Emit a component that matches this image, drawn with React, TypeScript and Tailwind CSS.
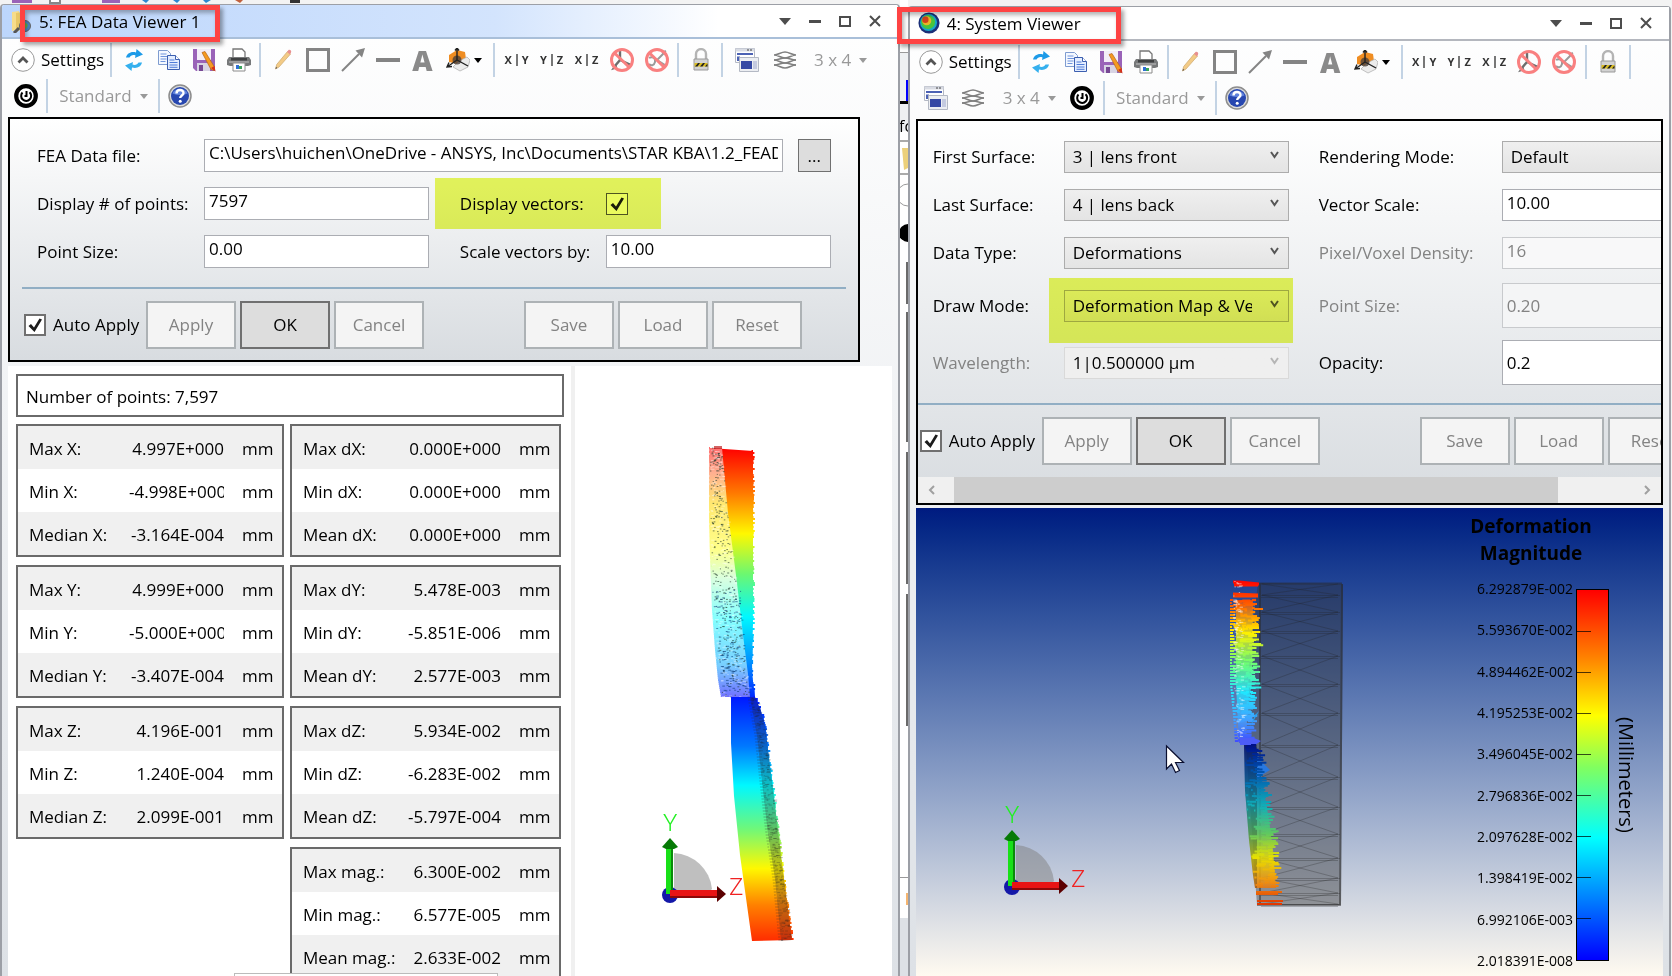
import type { ReactNode } from 'react';

type Point = [number, number];

// small seeded generator so the speckle is the same on every render
function createRandom(seed: number) {
    let state = seed;
    return () => {
        state = (state * 1664525 + 1013904223) % 4294967296;
        return state / 4294967296;
    };
}

// x of a poly line at height y, points are [x, y] sorted by y
function edgeAt(points: Point[], y: number) {
    for (let i = 1; i < points.length; i++) {
        const [x0, y0] = points[i - 1];
        const [x1, y1] = points[i];
        if (y <= y1) {
            return x0 + ((x1 - x0) * (y - y0)) / (y1 - y0);
        }
    }
    return points[points.length - 1][0];
}

function toPolygon(left: Point[], right: Point[]) {
    return [...left, ...[...right].reverse()].map((p) => p.join(',')).join(' ');
}

function speckle(left: Point[], right: Point[], count: number, length: number, seed: number) {
    const random = createRandom(seed);
    const top = left[0][1];
    const bottom = left[left.length - 1][1];
    let d = '';
    for (let i = 0; i < count; i++) {
        const y = top + random() * (bottom - top);
        const a = edgeAt(left, y);
        const b = edgeAt(right, y);
        const x = a + random() * (b - a - 1);
        d += `M${x.toFixed(1)} ${y.toFixed(1)}h${(1 + random() * length).toFixed(1)}`;
    }
    return d;
}

function fringe(edge: Point[], step: number, reach: number, seed: number) {
    const random = createRandom(seed);
    let d = '';
    for (let y = edge[0][1]; y < edge[edge.length - 1][1]; y += step) {
        d += `M${(edgeAt(edge, y) - reach / 2).toFixed(1)} ${y}h${((random() * 0.9 + 0.3) * reach).toFixed(1)}`;
    }
    return d;
}

/* ---------- toolbar icons ---------- */

function Svg({ children, size = 24 }: { children: ReactNode; size?: number }) {
    return (
        <svg width={size} height={size} viewBox="0 0 24 24" fill="none" aria-hidden="true">
            {children}
        </svg>
    );
}

const RefreshIcon = () => (
    <Svg>
        <path d="M4 9.500C5 5.500 9 3 14 4.500l.5-3.500 6.500 5.500-8 3.500.5-2.500C11 6.500 8.500 7.500 7.500 9.500z" fill="#1e9be8" />
        <path d="M20 14.500c-1 4-5 6.500-10 5l-.5 3.500L3 17.500l8-3.500-.5 2.500c2.500 1 5 0 6-2z" fill="#35b0ee" />
    </Svg>
);

const CopyIcon = () => (
    <Svg>
        <path d="M1.500 2.500h9l3 3v11h-12z" fill="#f4f8ff" stroke="#7f9cd0" />
        <path d="M3.500 6h6M3.500 8.500h7M3.500 11h6M3.500 13.500h5" stroke="#6f94dc" />
        <path d="M10.500 7.500h8l4 4v10h-12z" fill="#e3edff" stroke="#3c5fb0" />
        <path d="M18.500 7.500v4h4" fill="#fff" stroke="#3c5fb0" />
        <path d="M12.500 12h5M12.500 14.500h8M12.500 17h8M12.500 19.300h8" stroke="#4e7bd8" />
    </Svg>
);

const SaveIcon = () => (
    <Svg>
        <path d="M1 1h22v22H4l-3-3z" fill="#9a63b8" />
        <path d="M5 1h14v11H5z" fill="#f3eef8" />
        <path d="M5 15h13v8H5z" fill="#d8d4e4" />
        <path d="M7 17h4v6H7z" fill="#774894" />
        <path d="M10 4.500l3-1L22.500 19l-.5 3.500-3-1z" fill="#f59a22" stroke="#b4641a" strokeWidth=".7" />
        <path d="M19 20l3.500-2 1 5.500z" fill="#d6301c" />
    </Svg>
);

const PrinterIcon = () => (
    <Svg>
        <path d="M6 10V1h9l3 3v6" fill="#fff" stroke="#777" strokeWidth="1.300" />
        <path d="M2 9h20l2 3v5l-3 1H3l-3-1v-5z" fill="#77797a" />
        <path d="M4 10h16v2.500H4z" fill="#3f4142" />
        <path d="M2 14h20" stroke="#c4c4c4" />
        <path d="M6 15h12v8H6z" fill="#fff" stroke="#8b8b8b" />
        <path d="M9 17h3v4H9z" fill="#2f6fd6" />
        <path d="M12 18h3v3h-3z" fill="#39a45b" />
    </Svg>
);

const PencilIcon = () => (
    <Svg>
        <path d="M4.500 21l1.200-4.500L16.500 3.500l3 2.500L8 19z" fill="#f3cb86" stroke="#d0ad75" strokeWidth=".8" />
        <path d="M16 4l1.500-2c1-1 3.500.5 2.500 2.500L19 6.500z" fill="#e89090" />
        <path d="M4.500 21l.5-2.200 1.300 1.200z" fill="#555" />
    </Svg>
);

const RectIcon = () => (
    <Svg>
        <rect x="1.500" y="1.500" width="21" height="21" stroke="#848484" strokeWidth="3" />
    </Svg>
);

const ArrowIcon = () => (
    <Svg>
        <path d="M1 23L18 6" stroke="#848484" strokeWidth="2" />
        <path d="M14.500 2.500L24 0l-3 9.500z" fill="#848484" />
    </Svg>
);

const LineIcon = () => (
    <Svg>
        <path d="M0 12h24" stroke="#848484" strokeWidth="4" />
    </Svg>
);

const AxesIcon = () => (
    <Svg>
        <path d="M3 7l8-5 8 2 1 7-8 5-9-2z" fill="#ef8d22" />
        <path d="M13 13l8-4 3 3-2 7-8 4-7-4z" fill="#ececec" stroke="#aaa" strokeWidth=".7" />
        <circle cx="11" cy="12" r="4.500" fill="#4c4038" fillOpacity=".8" />
        <path d="M11 12V0M11 12L1 19M11 12l11 6M9 2.500L11 0l2 2.500M3 14.500L1 19l5-.5" stroke="#222" strokeWidth="1.400" />
    </Svg>
);

const NoEntryIcon = ({ variant }: { variant: 'axes' | 'rotate' }) => (
    <Svg>
        {variant === 'axes' ? (
            <path d="M10 3v9l-6 7M10 12l11 5M6 17l-2 3 3-1" stroke="#6d6d6d" strokeWidth="2.400" />
        ) : (
            <path d="M4 10c3-2 7 0 6 4s-4 4-6 2M20 4l-8 8 8 5M17 5l4-2" stroke="#9a9a9a" strokeWidth="2" />
        )}
        <circle cx="12" cy="12" r="10.500" stroke="#f98080" strokeWidth="3" />
        <path d="M4.500 5l15 14.500" stroke="#f98080" strokeWidth="3" />
    </Svg>
);

const LockIcon = () => (
    <Svg>
        <path d="M7 12V6c0-6.500 10-6.500 10 0v6" stroke="#b4b4b4" strokeWidth="2.400" />
        <path d="M5 11h14v11H5z" fill="#d2d2d2" stroke="#9a9a9a" />
        <path d="M5.500 15h13v3.500h-13z" fill="#d9bc22" />
        <path d="M6 18.500l3-3.500h2l-2.500 3.500zM11 18.500l3-3.500h2l-2.500 3.500zM16 18.500l2.500-3v3z" fill="#222" />
    </Svg>
);

const WindowsIcon = () => (
    <Svg>
        <path d="M.5.500h19v14H.5z" fill="#fff" stroke="#b4b9c4" />
        <path d="M.5.500h19V3.500H.5z" fill="#d8dbe3" />
        <path d="M12 2h2M15 2h2" stroke="#444" />
        <path d="M2 5h16v2H2zM2 8.500h3V13H2z" fill="#4c62b4" />
        <path d="M4.500 9.500h19v14h-19z" fill="#eceef2" stroke="#b4b9c4" />
        <path d="M6 13h11v8H6z" fill="#3548a4" />
        <path d="M18 13h4v8h-4z" fill="#c4cae0" />
    </Svg>
);

const LayersIcon = () => (
    <Svg>
        <g stroke="#808080" strokeWidth="1.500">
            <path d="M1 7c4 0 7-3 11-3s7 3 11 3c-4 0-7 3-11 3S5 7 1 7z" fill="#fff" />
            <path d="M1 12c4 0 7 3 11 3s7-3 11-3M1 17c4 0 7 3 11 3s7-3 11-3" />
            <path d="M1 12c4 0 7-2 11-2s7 2 11 2M1 17c4 0 7-2 11-2s7 2 11 2" />
        </g>
    </Svg>
);

const TargetIcon = () => (
    <Svg>
        <circle cx="12" cy="12" r="9.800" fill="#fff" stroke="#000" strokeWidth="4.200" />
        <path d="M8.500 8.500a5 5 0 1 0 7-.3" stroke="#000" strokeWidth="2" />
        <path d="M12.500 12.500V7M10.500 12h3" stroke="#000" strokeWidth="2" />
    </Svg>
);

const HelpIcon = () => (
    <Svg>
        <circle cx="12" cy="12" r="11" fill="#dcdcdc" stroke="#8d8d8d" strokeWidth="1.500" />
        <circle cx="12" cy="12" r="9" fill="#2747b0" />
        <path d="M4.500 9.500C6 3 18 3 19.500 9.500c-5 2-10 2-15 0z" fill="#5f82dc" />
        <path d="M8.500 9.500c0-4.500 7-4.500 7-.5 0 2.500-3.300 2.500-3.300 5" stroke="#fff" strokeWidth="2.400" />
        <circle cx="12.200" cy="17.300" r="1.500" fill="#fff" />
    </Svg>
);

const FolderIcon = () => (
    <Svg>
        <path d="M2 3l7-1v18l-7 2z" fill="#f6dc8a" />
        <path d="M6 4l6-1v17l-6 3z" fill="#e8c766" />
        <circle cx="15" cy="17" r="5.500" fill="#4a86c8" stroke="#666" />
        <path d="M12 15l3-2 3 3-2 4z" fill="#69ab4c" />
        <path d="M4 24l5-5" stroke="#555" strokeWidth="3" />
    </Svg>
);

const SystemIcon = () => (
    <Svg size={22}>
        <circle cx="12" cy="12" r="11.500" fill="#1c2f78" />
        <circle cx="11.500" cy="11.500" r="9.300" fill="#16a5c8" />
        <circle cx="11" cy="11" r="7.600" fill="#48c43c" />
        <circle cx="9.500" cy="9.500" r="5" fill="#e8b428" />
        <circle cx="8" cy="8.500" r="3.500" fill="#d0401c" />
    </Svg>
);

/* ---------- window chrome ---------- */

function ToolButton({ label, children }: { label: string; children: ReactNode }) {
    return (
        <button aria-label={label} className="flex h-9 w-[35px] shrink-0 items-center justify-center">
            {children}
        </button>
    );
}

function PlaneButton({ a, b }: { a: string; b: string }) {
    return (
        <button className="flex h-9 w-[35px] shrink-0 items-center justify-center gap-1 text-[11px] font-bold text-[#333]">
            <span>{a}</span>
            <span className="h-3 w-0.5 bg-[#777]" />
            <span>{b}</span>
        </button>
    );
}

const Separator = () => <span className="mr-1 ml-[3px] h-[34px] w-0.5 shrink-0 bg-[#c3d3e4]" />;

function Caret({ className }: { className: string }) {
    return (
        <svg width="8" height="5" viewBox="0 0 8 5" className={className} aria-hidden="true">
            <path d="M0 0h8L4 5z" fill="currentColor" />
        </svg>
    );
}

function Toolbar() {
    return (
        <div className="mb-[3px] flex flex-wrap items-center pt-[3px]">
            <button className="flex h-9 w-[99px] shrink-0 items-center gap-1.5 pl-[3px] whitespace-nowrap">
                <Svg>
                    <circle cx="12" cy="12" r="11.300" fill="#fff" stroke="#999" />
                    <path d="M7.500 14.500L12 10l4.500 4.500" stroke="#555" strokeWidth="2.800" />
                </Svg>
                Settings
            </button>
            <Separator />
            <ToolButton label="Refresh"><RefreshIcon /></ToolButton>
            <ToolButton label="Copy"><CopyIcon /></ToolButton>
            <ToolButton label="Save image"><SaveIcon /></ToolButton>
            <ToolButton label="Print"><PrinterIcon /></ToolButton>
            <Separator />
            <ToolButton label="Pencil"><PencilIcon /></ToolButton>
            <ToolButton label="Rectangle"><RectIcon /></ToolButton>
            <ToolButton label="Arrow"><ArrowIcon /></ToolButton>
            <ToolButton label="Line"><LineIcon /></ToolButton>
            <button className="flex h-9 w-[35px] shrink-0 items-center justify-center text-[28px] font-extrabold text-[#8a8a8a]">A</button>
            <button aria-label="Orientation" className="flex h-9 w-[50px] shrink-0 items-center gap-1 pl-1.5">
                <AxesIcon />
                <Caret className="text-black" />
            </button>
            <Separator />
            <PlaneButton a="X" b="Y" />
            <PlaneButton a="Y" b="Z" />
            <PlaneButton a="X" b="Z" />
            <ToolButton label="Hide axes"><NoEntryIcon variant="axes" /></ToolButton>
            <ToolButton label="Lock rotation"><NoEntryIcon variant="rotate" /></ToolButton>
            <Separator />
            <ToolButton label="Lock window"><LockIcon /></ToolButton>
            <Separator />
            <button aria-label="Clone window" className="flex h-9 w-10 shrink-0 items-center justify-center">
                <WindowsIcon />
            </button>
            <ToolButton label="Layers"><LayersIcon /></ToolButton>
            <button className="flex h-9 shrink-0 items-center gap-2 pr-[9px] pl-3 whitespace-nowrap text-[#999]">
                3 x 4
                <Caret className="text-[#999]" />
            </button>
            <ToolButton label="Reset view"><TargetIcon /></ToolButton>
            <Separator />
            <button className="flex h-9 w-[103px] shrink-0 items-center justify-center gap-2 whitespace-nowrap text-[#999]">
                Standard
                <Caret className="text-[#999]" />
            </button>
            <Separator />
            <button aria-label="Help" className="flex h-9 shrink-0 items-center pl-1">
                <HelpIcon />
            </button>
        </div>
    );
}

function WindowButtons() {
    return (
        <div className="ml-auto flex">
            <button aria-label="Window menu" className="flex h-8 w-[30px] items-center justify-center">
                <svg width="12" height="7" viewBox="0 0 12 7"><path d="M0 0h12L6 7z" fill="#4d4d4d" /></svg>
            </button>
            <button aria-label="Minimize" className="flex h-8 w-[30px] items-center justify-center">
                <svg width="12" height="3" viewBox="0 0 12 3"><path d="M0 0h12v3H0z" fill="#4d4d4d" /></svg>
            </button>
            <button aria-label="Maximize" className="flex h-8 w-[30px] items-center justify-center">
                <svg width="12" height="12" viewBox="0 0 12 12"><path d="M1 2h10v9H1z" fill="none" stroke="#4d4d4d" strokeWidth="2" /></svg>
            </button>
            <button aria-label="Close" className="flex h-8 w-[30px] items-center justify-center">
                <svg width="12" height="12" viewBox="0 0 12 12"><path d="M1 1l10 10M11 1L1 11" stroke="#4d4d4d" strokeWidth="2" /></svg>
            </button>
        </div>
    );
}

/* ---------- form pieces ---------- */

function FormButton({ children, primary = false }: { children: ReactNode; primary?: boolean }) {
    return (
        <button
            disabled={!primary}
            className={
                primary
                    ? 'h-12 w-[90px] shrink-0 border-2 border-[#707070] bg-[#dddddd]'
                    : 'h-12 w-[90px] shrink-0 border-2 border-[#adb2b5] bg-[#f4f4f4] text-[#838383]'
            }
        >
            {children}
        </button>
    );
}

function CheckBox({ id, tinted = false }: { id: string; tinted?: boolean }) {
    return (
        <span className="relative flex h-[22px] w-[22px] shrink-0">
            <input
                id={id}
                type="checkbox"
                defaultChecked
                className={
                    tinted
                        ? 'h-full w-full appearance-none border border-[#555] bg-white'
                        : 'h-full w-full appearance-none border-2 border-[#707070] bg-white'
                }
            />
            <svg className="pointer-events-none absolute inset-0" width="22" height="22" viewBox="0 0 22 22" aria-hidden="true">
                <path d="M4.500 12l2.500-2 3 3.500L15.500 4.500l2.500 1L10.500 18z" fill="#1c1c1c" />
            </svg>
        </span>
    );
}

function ButtonRow({ id }: { id: string }) {
    return (
        <div className="flex items-center gap-1 pt-3 pl-3.5">
            <CheckBox id={id} />
            <label htmlFor={id} className="w-[92px] shrink-0 pl-[3px] whitespace-nowrap">Auto Apply</label>
            <FormButton>Apply</FormButton>
            <FormButton primary>OK</FormButton>
            <FormButton>Cancel</FormButton>
            <div className="w-[92px] shrink-0" />
            <FormButton>Save</FormButton>
            <FormButton>Load</FormButton>
            <FormButton>Reset</FormButton>
        </div>
    );
}

function TextBox({ id, value }: { id: string; value: string }) {
    return (
        <input
            id={id}
            type="text"
            defaultValue={value}
            className="h-[33px] w-full min-w-0 border border-[#abadb3] bg-white px-1 pb-1.5"
        />
    );
}

function SelectBox({ id, value, disabled = false }: { id: string; value: string; disabled?: boolean }) {
    return (
        <span className="relative flex">
            <select
                id={id}
                disabled={disabled}
                className="h-8 w-full appearance-none border border-[#acacac] bg-linear-to-b from-[#efefef] to-[#e4e4e4] pr-9 pl-2 disabled:border-[#d9d9d9] disabled:from-[#efefef] disabled:to-[#efefef] disabled:text-black disabled:opacity-100"
            >
                <option>{value}</option>
            </select>
            <svg className="pointer-events-none absolute top-2.5 right-2.5" width="9" height="8" viewBox="0 0 9 8" aria-hidden="true">
                <path d="M1 1l3.500 5L8 1" fill="none" stroke={disabled ? '#b5b5b5' : '#555'} strokeWidth="2" />
            </svg>
        </span>
    );
}

/* ---------- statistics ---------- */

type Row = [string, string];

const positionStats: Row[][] = [
    [['Max X:', '4.997E+000'], ['Min X:', '-4.998E+000'], ['Median X:', '-3.164E-004']],
    [['Max Y:', '4.999E+000'], ['Min Y:', '-5.000E+000'], ['Median Y:', '-3.407E-004']],
    [['Max Z:', '4.196E-001'], ['Min Z:', '1.240E-004'], ['Median Z:', '2.099E-001']],
];

const deformationStats: Row[][] = [
    [['Max dX:', '0.000E+000'], ['Min dX:', '0.000E+000'], ['Mean dX:', '0.000E+000']],
    [['Max dY:', '5.478E-003'], ['Min dY:', '-5.851E-006'], ['Mean dY:', '2.577E-003']],
    [['Max dZ:', '5.934E-002'], ['Min dZ:', '-6.283E-002'], ['Mean dZ:', '-5.797E-004']],
    [['Max mag.:', '6.300E-002'], ['Min mag.:', '6.577E-005'], ['Mean mag.:', '2.633E-002']],
];

function StatTable({ rows }: { rows: Row[] }) {
    return (
        <table className="w-full table-fixed border-separate border-spacing-0 border-2 border-[#6a6a6a]">
            <tbody>
                {rows.map(([label, value]) => (
                    <tr key={label} className="h-[43px] odd:bg-[#f0f0f0] even:bg-white">
                        <th scope="row" className="p-0 pt-0.5 pl-[11px] text-left font-normal whitespace-nowrap">{label}</th>
                        <td className="w-[95px] overflow-hidden p-0 pt-0.5 text-right whitespace-nowrap">{value}</td>
                        <td className="w-[58px] p-0 pt-0.5 pl-[18px]">mm</td>
                    </tr>
                ))}
            </tbody>
        </table>
    );
}

/* ---------- drawings ---------- */

function Triad({ x, y }: { x: number; y: number }) {
    return (
        <g transform={`translate(${x} ${y})`}>
            <path d="M4-41A40 40 0 0 1 42-5L40-3H4z" fill="#808080" fillOpacity=".5" />
            <circle cx="0" cy="1" r="8" fill="#1418a8" />
            <path d="M-4 0v-48h7v48z" fill="#18e018" />
            <path d="M1 0v-48h2v48z" fill="#0a8a0a" />
            <path d="M-8-47L0-56l8 9-4 2h-8z" fill="#067a06" />
            <path d="M0-4h48v8H0z" fill="#e81414" />
            <path d="M0 2h48v2H0z" fill="#8c0808" />
            <path d="M47-8l9 8-9 8z" fill="#5c0000" />
            <text x="-7" y="-63" fontSize="24" fill="#22f022" className="font-['Roboto',sans-serif] font-light">Y</text>
            <text x="59" y="1" fontSize="24" fill="#f02222" className="font-['Roboto',sans-serif] font-light">Z</text>
        </g>
    );
}

const upperLeft: Point[] = [[710, 448], [710, 520], [711, 560], [713, 610], [716, 650], [719, 680], [722, 697]];
const upperSplit: Point[] = [[722, 448], [728, 513], [737, 583], [743, 635], [748, 674], [750, 697]];
const upperRight: Point[] = [[753, 451], [753, 600], [752, 674], [755, 697]];
const lowerLeft: Point[] = [[731, 697], [731, 743], [734, 796], [740, 855], [752, 941]];
const lowerSplit: Point[] = [[750, 697], [757, 736], [762, 782], [768, 834], [775, 879], [781, 941]];
const lowerRight: Point[] = [[755, 697], [761, 711], [765, 726], [773, 789], [783, 872], [792, 940]];

function FeaPlot() {
    return (
        <svg width="317" height="610" viewBox="575 366 317 610" className="shrink-0" role="img" aria-label="FEA vector plot">
            <defs>
                <linearGradient id="fea-upper" gradientUnits="userSpaceOnUse" x1="0" y1="448" x2="0" y2="700">
                    <stop offset="0" stopColor="#ff0000" />
                    <stop offset=".18" stopColor="#ff7a00" />
                    <stop offset=".34" stopColor="#fff800" />
                    <stop offset=".5" stopColor="#6cf870" />
                    <stop offset=".67" stopColor="#00f8ff" />
                    <stop offset=".85" stopColor="#0090ff" />
                    <stop offset="1" stopColor="#0020ff" />
                </linearGradient>
                <linearGradient id="fea-cap" gradientUnits="userSpaceOnUse" x1="0" y1="448" x2="0" y2="700">
                    <stop offset="0" stopColor="#ff7070" />
                    <stop offset=".1" stopColor="#ffb090" />
                    <stop offset=".22" stopColor="#ffe870" />
                    <stop offset=".4" stopColor="#ffff88" />
                    <stop offset=".52" stopColor="#d8ffe0" />
                    <stop offset=".68" stopColor="#84ffff" />
                    <stop offset=".86" stopColor="#78d0ff" />
                    <stop offset="1" stopColor="#7068ff" />
                </linearGradient>
                <linearGradient id="fea-lower" gradientUnits="userSpaceOnUse" x1="0" y1="697" x2="0" y2="942">
                    <stop offset="0" stopColor="#0018ff" />
                    <stop offset=".2" stopColor="#0078ff" />
                    <stop offset=".36" stopColor="#00f8ff" />
                    <stop offset=".54" stopColor="#70f878" />
                    <stop offset=".7" stopColor="#fff800" />
                    <stop offset=".85" stopColor="#ff8000" />
                    <stop offset="1" stopColor="#ff2a00" />
                </linearGradient>
            </defs>
            <Triad x={670} y={894} />
            <polygon points={toPolygon(upperLeft, upperRight)} fill="url(#fea-upper)" />
            <path d={fringe(upperRight, 2, 3, 5)} stroke="url(#fea-upper)" strokeWidth="2" />
            <path d={fringe(upperLeft, 2, 2, 9)} stroke="url(#fea-cap)" strokeWidth="2" />
            <polygon points={toPolygon(upperLeft, upperSplit)} fill="url(#fea-cap)" />
            <path d={speckle(upperLeft, upperSplit, 240, 3, 23)} stroke="#fff" strokeOpacity=".4" />
            <path d={speckle(upperLeft, upperSplit, 300, 1, 11)} stroke="#20382c" strokeOpacity=".6" />
            <path d={speckle([[712, 590], [721, 692]], [[741, 590], [748, 692]], 150, 2, 31)} stroke="#0c3c78" strokeOpacity=".6" />
            <path d="M714 447.500h8" stroke="#c02020" strokeWidth="3" strokeOpacity=".7" />
            <polygon points={toPolygon(lowerLeft, lowerRight)} fill="url(#fea-lower)" />
            <path d={fringe(lowerRight, 2, 3, 7)} stroke="url(#fea-lower)" strokeWidth="2" />
            <polygon points={toPolygon(lowerSplit, lowerRight)} fill="#303030" fillOpacity=".28" />
            <path d={fringe(lowerSplit, 3, 5, 41)} stroke="#303030" strokeOpacity=".35" />
            <path d={speckle(lowerSplit, lowerRight, 300, 3, 17)} stroke="#202020" strokeOpacity=".25" />
        </svg>
    );
}

const meshRows = [584, 595, 612, 631, 656, 684, 713, 745, 777, 807, 834, 858, 878, 893, 904];

const vecUpperLeft: Point[] = [[1233, 600], [1233, 684], [1236, 715], [1238, 743]];
const vecUpperRight: Point[] = [[1256, 600], [1256, 640], [1254, 690], [1252, 715], [1246, 743]];
const vecLowerLeft: Point[] = [[1244, 745], [1245, 790], [1249, 840], [1253, 875], [1255, 888]];
const vecLowerRight: Point[] = [[1256, 745], [1258, 760], [1264, 790], [1269, 820], [1273, 850], [1276, 888]];

function SystemScene() {
    return (
        <svg width="747" height="468" viewBox="916 508 747 468" className="absolute top-0 left-0" role="img" aria-label="System deformation view">
            <defs>
                <linearGradient id="sys-upper" gradientUnits="userSpaceOnUse" x1="0" y1="580" x2="0" y2="745">
                    <stop offset="0" stopColor="#ff0000" />
                    <stop offset=".15" stopColor="#ff6000" />
                    <stop offset=".32" stopColor="#fff000" />
                    <stop offset=".5" stopColor="#70ff70" />
                    <stop offset=".68" stopColor="#20e8ff" />
                    <stop offset=".85" stopColor="#40a0ff" />
                    <stop offset="1" stopColor="#4040ff" />
                </linearGradient>
                <linearGradient id="sys-lower" gradientUnits="userSpaceOnUse" x1="0" y1="745" x2="0" y2="906">
                    <stop offset="0" stopColor="#001088" />
                    <stop offset=".18" stopColor="#0058b0" />
                    <stop offset=".38" stopColor="#10b0b8" />
                    <stop offset=".55" stopColor="#60c860" />
                    <stop offset=".7" stopColor="#e8e000" />
                    <stop offset=".85" stopColor="#f09010" />
                    <stop offset="1" stopColor="#e03000" />
                </linearGradient>
            </defs>
            <path d="M1258 583L1343 584L1341 905H1257L1246 745L1251 640z" fill="#303030" fillOpacity=".42" />
            <path d="M1260 583V905M1342 584L1340 905M1258 583.500H1342M1257 905H1341" stroke="#282828" strokeOpacity=".5" strokeWidth="2" />
            {meshRows.slice(1).map((y, i) => (
                <path
                    key={y}
                    d={`M1261 ${y + 0.5}H1340M1261 ${y + 2.5}H1338M1262 ${meshRows[i]}L1338 ${y}M1338 ${meshRows[i]}L1262 ${y}`}
                    stroke="#202020"
                    strokeOpacity=".27"
                    fill="none"
                />
            ))}
            <g stroke="url(#sys-upper)">
                <path d="M1233 582h6l20 2M1234 585h24M1233 594l25 1M1233 596h25" strokeWidth="3" />
                <path d={speckle(vecUpperLeft, vecUpperRight, 210, 9, 3)} strokeWidth="2" />
                <path d={fringe(vecUpperLeft, 3, 6, 8)} strokeWidth="2" />
                <path d={fringe(vecUpperRight, 4, 8, 12)} strokeWidth="2" />
            </g>
            <polygon points={toPolygon([[1236, 600], [1236, 684], [1239, 743]], [[1253, 600], [1252, 680], [1244, 743]])} fill="url(#sys-upper)" fillOpacity=".8" />
            <path d={speckle([[1233, 581], [1233, 684], [1238, 743]], [[1241, 581], [1243, 684], [1245, 743]], 130, 3, 51)} stroke="#fff" strokeOpacity=".5" />
            <path d="M1255 715l4-4-1 2-8 14z" fill="#28a0f0" />
            <path d="M1240 738h14l7 3-6 4h-15z" fill="#4c5cf8" />
            <polygon points={toPolygon(vecLowerLeft, vecLowerRight)} fill="url(#sys-lower)" fillOpacity=".85" />
            <polygon points={toPolygon(vecLowerLeft, [[1257, 745], [1257, 888]])} fill="#101010" fillOpacity=".25" />
            <path d="M1257 757l13 13-13 8z" fill="#2878e0" />
            <g stroke="url(#sys-lower)">
                <path d={fringe(vecLowerRight, 3, 10, 19)} strokeWidth="2" />
                <path d={speckle(vecLowerLeft, vecLowerRight, 120, 9, 29)} strokeWidth="2" />
                <path d="M1256 892h26M1256 894h22M1257 901h26M1257 904h25" strokeWidth="2" />
            </g>
            <Triad x={1012} y={886} />
            <path d="M1166.500 746v23l5-5 4 8.500 4-2-4-8h8z" fill="#fff" stroke="#0a0f30" strokeWidth="1.200" />
        </svg>
    );
}

const legendValues = [
    '6.292879E-002',
    '5.593670E-002',
    '4.894462E-002',
    '4.195253E-002',
    '3.496045E-002',
    '2.796836E-002',
    '2.097628E-002',
    '1.398419E-002',
    '6.992106E-003',
    '2.018391E-008',
];

function Legend() {
    return (
        <div className="relative ml-auto pt-[5px] pr-[23px] text-black">
            <h2 className="w-[124px] text-center text-[19px] leading-[27px] font-bold">
                Deformation Magnitude
            </h2>
            <div className="mt-3 flex items-center pl-2">
                <ol className="flex h-[392px] flex-col justify-between text-right text-[14px] leading-5">
                    {legendValues.map((value) => (
                        <li key={value}>{value}</li>
                    ))}
                </ol>
                <div className="ml-[3px] flex h-[372px] w-[33px] flex-col justify-between border border-black bg-[linear-gradient(to_bottom,#ff0000,#ff8000_18%,#ffff00_34%,#80ff60_48%,#00ffff_67%,#0000ff)]">
                    {legendValues.map((value) => (
                        <span key={value} className="h-px w-3.5 bg-black/70 first:bg-transparent last:bg-transparent" />
                    ))}
                </div>
                <span className="ml-[3px] text-[20px] leading-7 [writing-mode:vertical-rl]">(Millimeters)</span>
            </div>
        </div>
    );
}

/* ---------- windows ---------- */

function FeaDataViewer() {
    return (
        <section className="relative mt-1 flex min-w-0 flex-[900] flex-col overflow-hidden rounded-t-sm border-x-2 border-t border-[#9c9fa6] bg-linear-to-b from-white to-[#dde1e6]">
            <header className="flex h-[34px] shrink-0 items-center border-b-2 border-[#a9bfd9] bg-linear-to-r from-[#bcd6fc] via-[#d3e4fd] via-55% to-white to-80% px-2">
                <FolderIcon />
                <h1 className="pt-0.5 pl-[5px]">5: FEA Data Viewer 1</h1>
                <WindowButtons />
            </header>
            <div className="pointer-events-none absolute top-0 left-[18px] h-[37px] w-[200px] border-[5px] border-[#fe4343] shadow-[3px_3px_4px_rgba(0,0,0,0.35),inset_2px_3px_4px_rgba(0,0,0,0.3)]" />
            <div className="shrink-0 px-1.5">
                <Toolbar />
                <form className="mr-8 border-2 border-black bg-linear-to-b from-white to-[#d8dce0] pt-5 pb-[11px]">
                    <div className="grid grid-cols-[167px_1fr_31px_146px_1fr] items-center gap-y-[15px] px-[27px]">
                        <label htmlFor="fea-file">FEA Data file:</label>
                        <div className="col-span-4 flex gap-[15px]">
                            <TextBox id="fea-file" value="C:\Users\huichen\OneDrive - ANSYS, Inc\Documents\STAR KBA\1.2_FEAData\lens_front_deformation.txt" />
                            <button type="button" className="h-[33px] w-[33px] shrink-0 border border-[#707070] bg-[#dddddd]">...</button>
                        </div>
                        <label htmlFor="fea-count" className="whitespace-nowrap">Display # of points:</label>
                        <TextBox id="fea-count" value="7597" />
                        <div />
                        <div className="relative col-span-2 flex h-[33px] items-center">
                            <label htmlFor="fea-vectors" className="w-[146px]">Display vectors:</label>
                            <CheckBox id="fea-vectors" tinted />
                            <div className="pointer-events-none absolute -top-[9px] -left-[25px] h-[51px] w-[226px] bg-[#eafa5e] mix-blend-multiply" />
                        </div>
                        <label htmlFor="fea-size">Point Size:</label>
                        <TextBox id="fea-size" value="0.00" />
                        <div />
                        <label htmlFor="fea-scale">Scale vectors by:</label>
                        <TextBox id="fea-scale" value="10.00" />
                    </div>
                    <hr className="mx-3 mt-[19px] border-t-2 border-[#91aec4]" />
                    <ButtonRow id="fea-auto" />
                </form>
            </div>
            <div className="mx-1.5 mt-1 flex min-h-0 flex-1">
                <div className="w-[563px] shrink-0 overflow-hidden bg-white pt-2 pr-[7px] pl-2">
                    <p className="flex h-[43px] items-center border-2 border-[#6a6a6a] px-2 pt-0.5">Number of points: 7,597</p>
                    <div className="mt-[7px] flex gap-1.5">
                        <div className="flex w-[268px] flex-col gap-2">
                            {positionStats.map((rows) => (
                                <StatTable key={rows[0][0]} rows={rows} />
                            ))}
                        </div>
                        <div className="flex w-[271px] flex-col gap-2">
                            {deformationStats.map((rows) => (
                                <StatTable key={rows[0][0]} rows={rows} />
                            ))}
                        </div>
                    </div>
                </div>
                <div className="w-1 shrink-0 bg-[#f0f0f0]" />
                <div className="flex min-w-0 flex-1 overflow-hidden bg-white">
                    <FeaPlot />
                </div>
            </div>
            <div className="absolute bottom-0 left-[232px] h-[3px] w-[264px] border border-b-0 border-[#bbb] bg-white" />
        </section>
    );
}

function SystemViewer() {
    return (
        <section className="relative mt-1.5 flex min-w-0 flex-[763] flex-col rounded-t-sm border-x-2 border-t border-[#9c9fa6] bg-linear-to-b from-white to-[#dde1e6]">
            <header className="flex h-[34px] shrink-0 items-center border-b-2 border-[#b4b7be] bg-white px-2">
                <SystemIcon />
                <h1 className="pt-0.5 pl-[7px]">4: System Viewer</h1>
                <WindowButtons />
            </header>
            <div className="pointer-events-none absolute top-0 -left-[13px] h-[37px] w-[224px] border-[5px] border-[#fe4343] shadow-[3px_3px_4px_rgba(0,0,0,0.35),inset_2px_3px_4px_rgba(0,0,0,0.3)]" />
            <div className="shrink-0 px-1.5">
                <Toolbar />
                <div className="overflow-hidden border-2 border-black bg-linear-to-b from-white to-[#d8dce0]">
                    <form className="-ml-3 w-[848px] pt-[18px] pb-3">
                        <div className="grid grid-cols-[131px_225px_30px_183px_225px] grid-rows-[36px_36px_36px_45px_45px] items-center gap-y-3 px-[27px]">
                            <label htmlFor="sys-first">First Surface:</label>
                            <SelectBox id="sys-first" value="3 | lens front" />
                            <div />
                            <label htmlFor="sys-render">Rendering Mode:</label>
                            <SelectBox id="sys-render" value="Default" />

                            <label htmlFor="sys-last">Last Surface:</label>
                            <SelectBox id="sys-last" value="4 | lens back" />
                            <div />
                            <label htmlFor="sys-scale">Vector Scale:</label>
                            <input id="sys-scale" type="text" defaultValue="10.00" className="h-8 border border-[#abadb3] bg-white px-1 pb-1.5" />

                            <label htmlFor="sys-type">Data Type:</label>
                            <SelectBox id="sys-type" value="Deformations" />
                            <div />
                            <label htmlFor="sys-density" className="whitespace-nowrap text-[#838383]">Pixel/Voxel Density:</label>
                            <input id="sys-density" type="text" disabled defaultValue="16" className="h-8 border border-[#c8cacd] bg-[#f8f8f9] px-1 pb-1.5 text-[#838383]" />

                            <label htmlFor="sys-draw">Draw Mode:</label>
                            <div className="relative">
                                <SelectBox id="sys-draw" value="Deformation Map & Vectors" />
                                <div className="pointer-events-none absolute -top-3 -right-1 -left-[15px] h-[65px] bg-[#eafa5e] mix-blend-multiply" />
                            </div>
                            <div />
                            <label htmlFor="sys-point" className="text-[#838383]">Point Size:</label>
                            <input id="sys-point" type="text" disabled defaultValue="0.20" className="h-[45px] border border-[#c8cacd] bg-[#f4f5f6] px-1 text-[#838383]" />

                            <label htmlFor="sys-wave" className="text-[#838383]">Wavelength:</label>
                            <SelectBox id="sys-wave" value="1|0.500000 µm" disabled />
                            <div />
                            <label htmlFor="sys-opacity">Opacity:</label>
                            <input id="sys-opacity" type="text" defaultValue="0.2" className="h-[45px] border border-[#abadb3] bg-white px-1" />
                        </div>
                        <hr className="mt-[18px] border-t-2 border-[#91aec4]" />
                        <ButtonRow id="sys-auto" />
                    </form>
                    <div className="flex h-[26px] bg-[#f0f0f0]">
                        <button aria-label="Scroll left" className="flex w-9 items-center pl-2.5">
                            <svg width="7" height="10" viewBox="0 0 7 10"><path d="M6 1L2 5l4 4" fill="none" stroke="#a0a0a0" strokeWidth="2" /></svg>
                        </button>
                        <div className="flex-1"><div className="h-full w-[90%] bg-[#cdcdcd]" /></div>
                        <button aria-label="Scroll right" className="flex w-9 items-center justify-end pr-2.5">
                            <svg width="7" height="10" viewBox="0 0 7 10"><path d="M1 1l4 4-4 4" fill="none" stroke="#a0a0a0" strokeWidth="2" /></svg>
                        </button>
                    </div>
                </div>
            </div>
            <div className="relative mx-1.5 mt-[3px] flex min-h-0 flex-1 items-start overflow-hidden bg-linear-to-b from-[#001a80] to-[#fffaf0]">
                <SystemScene />
                <Legend />
            </div>
        </section>
    );
}

// what shows of the window lying behind the two viewers
function BackgroundStrip() {
    return (
        <div className="w-2 shrink-0 overflow-hidden bg-white">
            <svg width="8" height="976" viewBox="0 0 8 976" aria-hidden="true">
                <path d="M0 53h8v78H0z" fill="#eef0f2" />
                <path d="M0 52.500h8M0 877.500h8M0 925.500h8" stroke="#999" />
                <path d="M6 80h2v21H6z" fill="#0000ff" />
                <path d="M0 101h8v3H0z" fill="#000" />
                <path d="M0 141h8M0 174h8" stroke="#aaa" strokeWidth="2" />
                <path d="M2 148h6v20l-4 2z" fill="#ecd07a" />
                <path d="M8 184a11 11 0 0 0 0 22" fill="none" stroke="#999" />
                <path d="M8 224a9 9 0 0 0 0 18" fill="#000" />
                <path d="M7 262v42M7 312v130M7 452v132M7 594v132" stroke="#6a6a6a" strokeWidth="2" />
                <path d="M0 918h8v58H0z" fill="#dde1e6" />
                <path d="M6 893h2v12H6z" fill="#f5b570" />
                <text x="-1" y="132" fontSize="16">fo</text>
            </svg>
        </div>
    );
}

export default function App() {
    return (
        <div className="relative flex h-screen overflow-hidden bg-[#f3f3f3] pr-px font-['Open_Sans','Noto_Sans',sans-serif] text-[17px] leading-6 text-black">
            <svg className="absolute top-0 left-0" width="320" height="4" viewBox="0 0 320 4" aria-hidden="true">
                <path d="M12 0h20v3H12zM102 0h18v3h-18z" fill="#9a63b8" />
                <path d="M49 0h12v4H49z" fill="#888" />
                <path d="M51 0h8v2h-8z" fill="#fff" />
                <path d="M142 0h7l-3 3zM173 0h7l-3 3zM203 0h8l-5 3z" fill="#2c88d0" />
                <path d="M235 0h8l-3 3z" fill="#c0603c" />
                <path d="M290 0h10v3h-10z" fill="#333" />
            </svg>
            <FeaDataViewer />
            <BackgroundStrip />
            <SystemViewer />
        </div>
    );
}
